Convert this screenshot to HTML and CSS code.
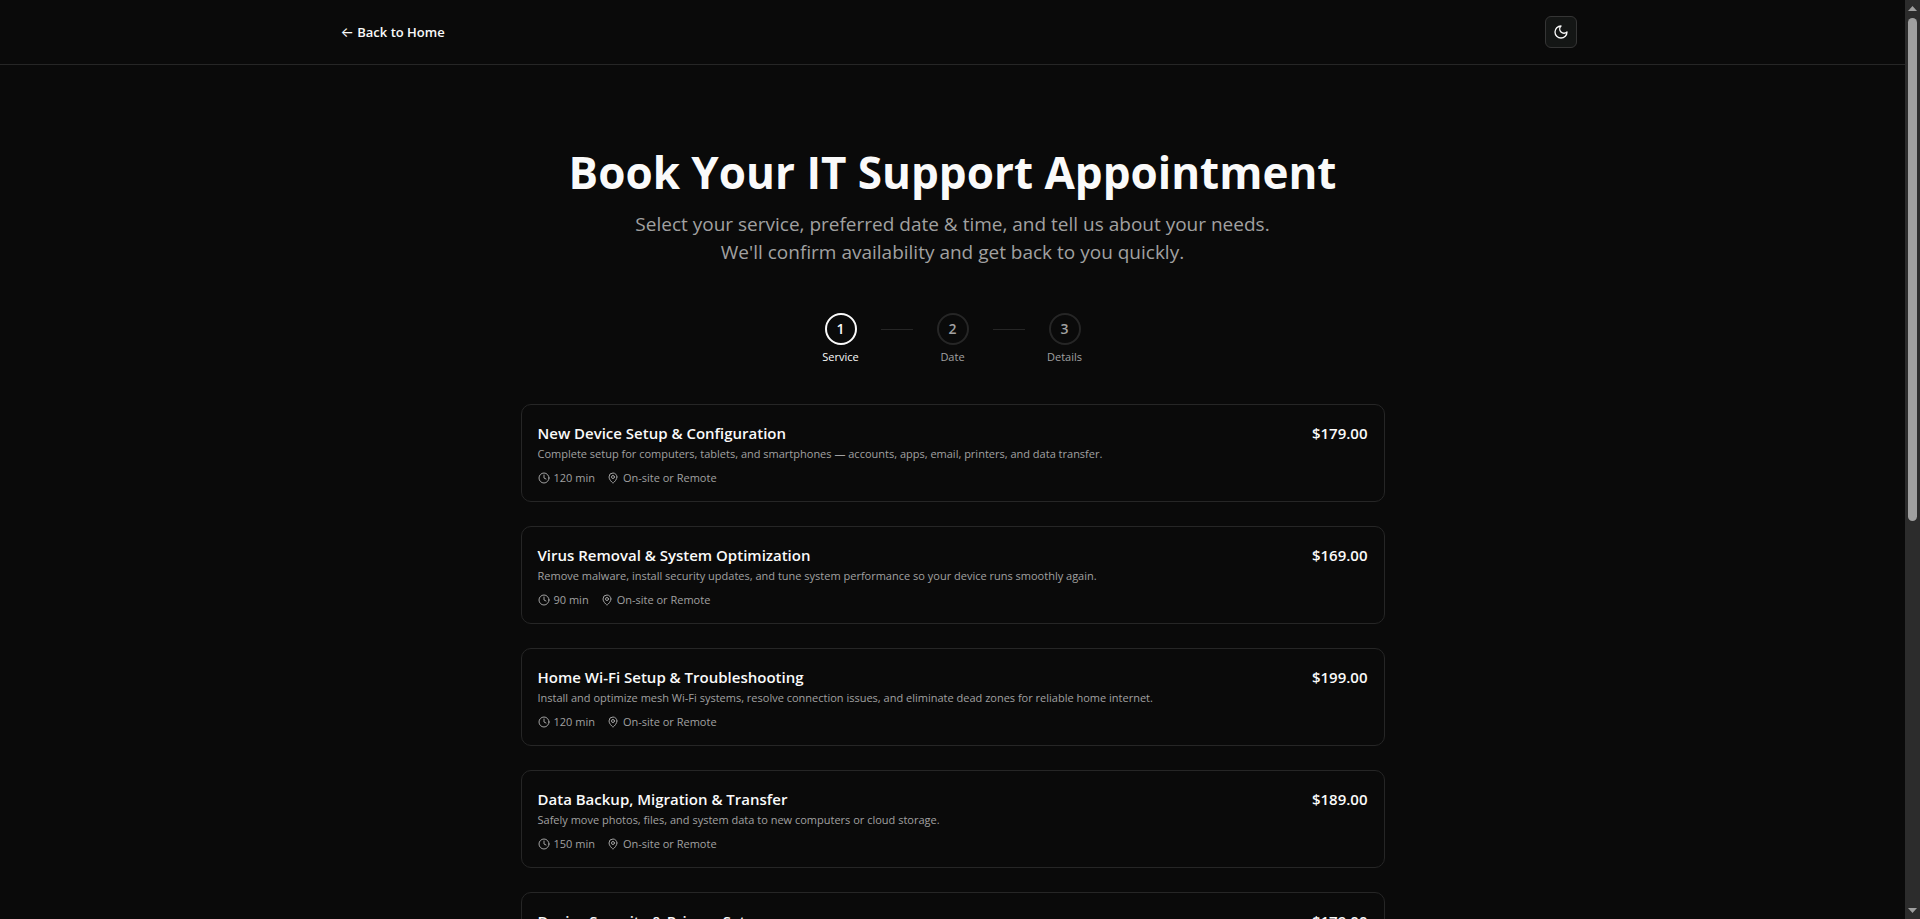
FILE: index.html
```
<!DOCTYPE html>
<html lang="en">
<head>
  <meta charset="UTF-8" />
  <meta name="viewport" content="width=device-width, initial-scale=1" />
  <title>Book Your IT Support Appointment</title>
  <link rel="stylesheet" href="styles.css">
</head>
<body>
  <!-- Shared icons -->
  <svg class="sprite" aria-hidden="true">
    <symbol id="icon-clock" viewBox="0 0 24 24">
      <circle cx="12" cy="12" r="10" />
      <path d="M12 6v6l4 2" />
    </symbol>
    <symbol id="icon-pin" viewBox="0 0 24 24">
      <path d="M20 10c0 4.993-5.539 10.193-7.399 11.799a1 1 0 0 1-1.202 0C9.539 20.193 4 14.993 4 10a8 8 0 0 1 16 0" />
      <circle cx="12" cy="10" r="3" />
    </symbol>
    <symbol id="icon-moon" viewBox="0 0 24 24">
      <path d="M12 3a6 6 0 0 0 9 9 9 9 0 1 1-9-9Z" />
    </symbol>
  </svg>

  <div class="page">
    <header class="site-header">
      <div class="header-inner">
        <a class="back-link" href="#"><span class="back-arrow">←</span> Back to Home</a>
        <button class="theme-toggle" type="button" aria-label="Toggle theme">
          <svg class="icon"><use href="#icon-moon" /></svg>
        </button>
      </div>
    </header>

    <main class="container">
      <h1>Book Your IT Support Appointment</h1>
      <p class="intro">Select your service, preferred date &amp; time, and tell us about your needs.<br>We'll confirm availability and get back to you quickly.</p>

      <ol class="steps">
        <li class="step active"><span class="step-number">1</span>Service</li>
        <li class="step-line" aria-hidden="true"></li>
        <li class="step"><span class="step-number">2</span>Date</li>
        <li class="step-line" aria-hidden="true"></li>
        <li class="step"><span class="step-number">3</span>Details</li>
      </ol>

      <div class="services">
        <button class="service" type="button">
          <span class="service-top"><span class="service-name">New Device Setup &amp; Configuration</span><span class="price">$179.00</span></span>
          <span class="description">Complete setup for computers, tablets, and smartphones — accounts, apps, email, printers, and data transfer.</span>
          <span class="meta">
            <span class="meta-item"><svg class="icon"><use href="#icon-clock" /></svg>120 min</span>
            <span class="meta-item"><svg class="icon"><use href="#icon-pin" /></svg>On-site or Remote</span>
          </span>
        </button>

        <button class="service" type="button">
          <span class="service-top"><span class="service-name">Virus Removal &amp; System Optimization</span><span class="price">$169.00</span></span>
          <span class="description">Remove malware, install security updates, and tune system performance so your device runs smoothly again.</span>
          <span class="meta">
            <span class="meta-item"><svg class="icon"><use href="#icon-clock" /></svg>90 min</span>
            <span class="meta-item"><svg class="icon"><use href="#icon-pin" /></svg>On-site or Remote</span>
          </span>
        </button>

        <button class="service" type="button">
          <span class="service-top"><span class="service-name">Home Wi-Fi Setup &amp; Troubleshooting</span><span class="price">$199.00</span></span>
          <span class="description">Install and optimize mesh Wi-Fi systems, resolve connection issues, and eliminate dead zones for reliable home internet.</span>
          <span class="meta">
            <span class="meta-item"><svg class="icon"><use href="#icon-clock" /></svg>120 min</span>
            <span class="meta-item"><svg class="icon"><use href="#icon-pin" /></svg>On-site or Remote</span>
          </span>
        </button>

        <button class="service" type="button">
          <span class="service-top"><span class="service-name">Data Backup, Migration &amp; Transfer</span><span class="price">$189.00</span></span>
          <span class="description">Safely move photos, files, and system data to new computers or cloud storage.</span>
          <span class="meta">
            <span class="meta-item"><svg class="icon"><use href="#icon-clock" /></svg>150 min</span>
            <span class="meta-item"><svg class="icon"><use href="#icon-pin" /></svg>On-site or Remote</span>
          </span>
        </button>

        <button class="service" type="button">
          <span class="service-top"><span class="service-name">Device Security &amp; Privacy Setup</span><span class="price">$179.00</span></span>
        </button>
      </div>
    </main>
  </div>

  <div class="scrollbar" aria-hidden="true">
    <svg class="arrow" viewBox="0 0 9 5"><path d="M0 5L4.5 0L9 5Z" /></svg>
    <div class="track"><div class="thumb"></div></div>
    <svg class="arrow" viewBox="0 0 9 5"><path d="M0 0L4.5 5L9 0Z" /></svg>
  </div>
</body>
</html>
```
FILE: styles.css
```
* {
  box-sizing: border-box;
}

body {
  margin: 0;
  height: 100vh;
  display: flex;
  overflow: hidden;
  background-color: #0a0a0a;
  color: #fafafa;
  font-family: 'Segoe UI', 'Open Sans', 'Noto Sans', sans-serif;
  font-size: 16px;
  line-height: 24px;
}

button {
  font: inherit;
  color: inherit;
  cursor: pointer;
}

.sprite {
  display: none;
}

.icon {
  width: 12px;
  height: 12px;
  flex-shrink: 0;
  fill: none;
  stroke: currentColor;
  stroke-width: 2;
  stroke-linecap: round;
  stroke-linejoin: round;
}

.page {
  flex: 1;
  min-width: 0;
  overflow-y: auto;
  scrollbar-width: none;
}

/* Header */
.site-header {
  border-bottom: 1px solid #262626;
}

.header-inner {
  max-width: 1280px;
  margin: 0 auto;
  padding: 16px;
  display: flex;
  align-items: center;
  justify-content: space-between;
}

.back-link {
  padding: 0 12px;
  color: #fafafa;
  font-size: 13px;
  font-weight: 600;
  text-decoration: none;
}

.back-arrow {
  font-family: Inter, sans-serif;
  font-size: 14px;
  font-weight: 400;
}

.theme-toggle {
  width: 32px;
  height: 32px;
  padding: 0;
  display: flex;
  align-items: center;
  justify-content: center;
  background-color: #141615;
  border: 1px solid #353535;
  border-radius: 6px;
}

.theme-toggle .icon {
  width: 16px;
  height: 16px;
}

/* Booking */
.container {
  max-width: 896px;
  margin: 0 auto;
  padding: 80px 16px;
}

h1 {
  margin: 0 0 11px;
  font-size: 44px;
  line-height: 54px;
  font-weight: 700;
  text-align: center;
}

.intro {
  margin: 0 0 47px;
  color: #a1a1a1;
  font-size: 19px;
  line-height: 28px;
  text-align: center;
}

.steps {
  margin: 0 0 40px;
  padding: 0;
  display: flex;
  justify-content: center;
  gap: 8px;
  list-style: none;
}

.step {
  width: 64px;
  display: flex;
  flex-direction: column;
  align-items: center;
  gap: 5px;
  color: #a1a1a1;
  font-size: 11px;
  line-height: 14px;
}

.step-number {
  width: 32px;
  height: 32px;
  display: flex;
  align-items: center;
  justify-content: center;
  border: 2px solid #262626;
  border-radius: 50%;
  font-size: 14px;
  font-weight: 600;
}

.step.active,
.step.active .step-number {
  color: #fafafa;
  border-color: #fafafa;
}

.step-line {
  width: 32px;
  height: 1px;
  margin-top: 16px;
  background-color: #262626;
}

.services {
  display: flex;
  flex-direction: column;
  gap: 24px;
}

.service {
  padding: 16px;
  display: flex;
  flex-direction: column;
  background-color: #0a0a0a;
  border: 1px solid #262626;
  border-radius: 10px;
  text-align: left;
}

.service:hover {
  border-color: #525252;
}

.service-top {
  width: 100%;
  display: flex;
  justify-content: space-between;
  font-size: 15px;
  font-weight: 600;
}

.description,
.meta {
  color: #a1a1a1;
  font-size: 11px;
  line-height: 14px;
}

.description {
  line-height: 18px;
}

.meta {
  margin-top: 8px;
  display: flex;
  gap: 12px;
}

.meta-item {
  display: flex;
  align-items: center;
  gap: 4px;
}

/* Scrollbar */
.scrollbar {
  width: 15px;
  padding: 6px 3px;
  display: flex;
  flex-direction: column;
  align-items: center;
  gap: 7px;
  background-color: #2c2c2c;
}

.arrow {
  width: 9px;
  height: 5px;
  fill: #9f9f9f;
}

.track {
  flex: 1;
  width: 100%;
}

.thumb {
  height: 57%;
  background-color: #9f9f9f;
  border-radius: 5px;
}
```
